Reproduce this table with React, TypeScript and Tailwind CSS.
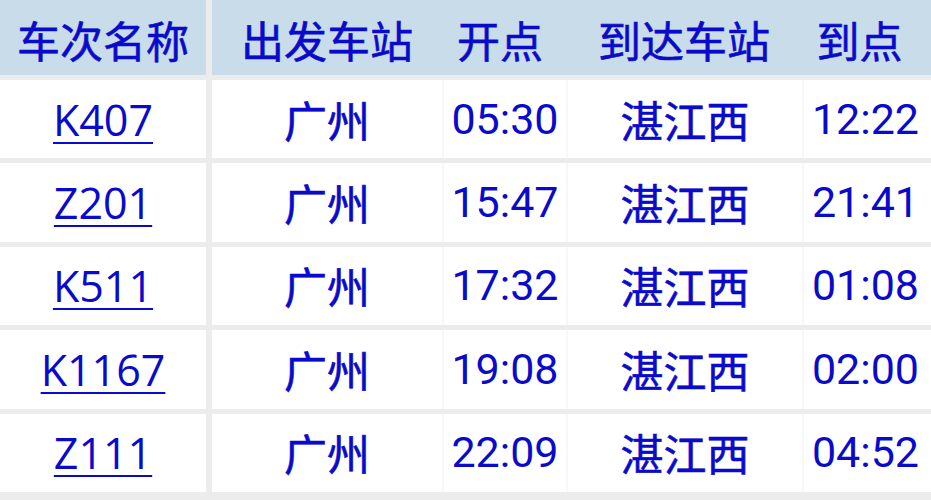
import React from "react";

const rows = [
  { code: "K407", from: "广州", dep: "05:30", to: "湛江西", arr: "12:22" },
  { code: "Z201", from: "广州", dep: "15:47", to: "湛江西", arr: "21:41" },
  { code: "K511", from: "广州", dep: "17:32", to: "湛江西", arr: "01:08" },
  { code: "K1167", from: "广州", dep: "19:08", to: "湛江西", arr: "02:00" },
  { code: "Z111", from: "广州", dep: "22:09", to: "湛江西", arr: "04:52" },
];

const headers = ["车次名称", "出发车站", "开点", "到达车站", "到点"];

const cjk = "font-['Noto_Sans_CJK_SC',sans-serif] [-webkit-text-stroke:0.6px_#0a0acc]";

export default function App() {
  return (
    <div className="w-[931px] h-[500px] overflow-hidden bg-[#ececec] text-[#0a0acc]">
      <div className="grid grid-cols-[212px_230px_124px_236px_129px] grid-rows-[75px_repeat(5,78.4px)] gap-y-[5px]">
        {headers.map((h, i) => (
          <div
            key={h}
            className={`bg-[#c8dcea] flex items-center justify-center pt-[4px] text-[43px] leading-none ${cjk} ${
              i === 0 ? "mr-[6px]" : ""
            } ${i === 2 ? "pr-[8px]" : ""} ${i === 4 ? "pr-[14px]" : ""}`}
          >
            {h}
          </div>
        ))}
        {rows.map((r) => (
          <React.Fragment key={r.code}>
            <div className="bg-white mr-[6px] flex items-center justify-center">
              <a
                href="#"
                className="font-['Open_Sans',sans-serif] text-[43px] leading-none underline decoration-[2px] underline-offset-[6px]"
              >
                {r.code}
              </a>
            </div>
            <div className={`bg-white flex items-center justify-center text-[43px] leading-none ${cjk}`}>
              {r.from}
            </div>
            <div className="bg-white border-l-[2px] border-[#f8f8f8] flex items-center justify-center font-['Roboto',sans-serif] text-[43px] leading-none">
              {r.dep}
            </div>
            <div className={`bg-white border-l-[2px] border-[#f8f8f8] flex items-center justify-center text-[43px] leading-none ${cjk}`}>
              {r.to}
            </div>
            <div className="bg-white border-l-[2px] border-[#f8f8f8] flex items-center justify-center font-['Roboto',sans-serif] text-[43px] leading-none pr-[4px]">
              {r.arr}
            </div>
          </React.Fragment>
        ))}
      </div>
    </div>
  );
}
